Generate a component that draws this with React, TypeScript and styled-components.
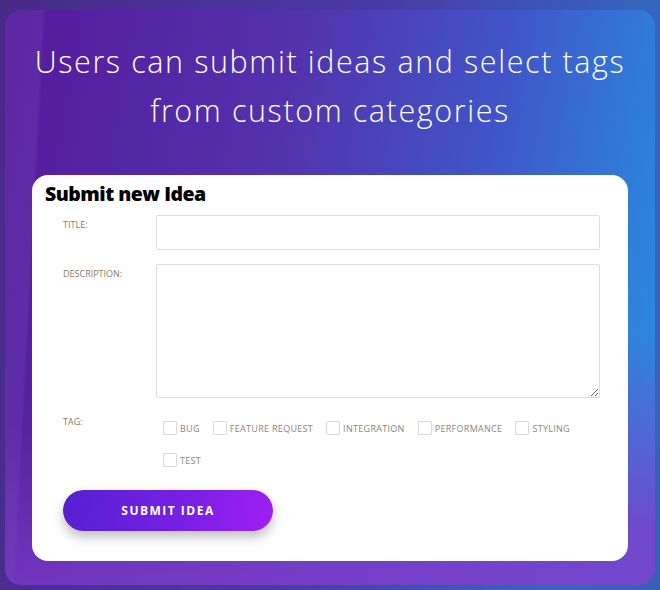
import React, { useState } from "react";
import styled, { createGlobalStyle } from "styled-components";

const TAGS = ["Bug", "Feature Request", "Integration", "Performance", "Styling", "Test"];

const GlobalStyle = createGlobalStyle`
  html, body {
    margin: 0;
    padding: 0;
  }
  body {
    width: 660px;
    height: 590px;
    overflow: hidden;
    font-family: "Open Sans", "Liberation Sans", sans-serif;
    background: linear-gradient(100deg, #462a86 0%, #4a3aa6 50%, #3466bd 85%, #3a5fb8 100%);
  }
`;

const Frame = styled.div`
  padding: 10px 5px 5px 5px;
  height: 590px;
  box-sizing: border-box;
`;

const Panel = styled.div`
  height: 100%;
  border-radius: 16px;
  overflow: hidden;
  box-sizing: border-box;
  padding: 27px 27px 0 27px;
  background:
    linear-gradient(172deg, transparent 62%, rgba(126, 60, 200, 0.85) 92%),
    linear-gradient(93deg, rgba(255, 255, 255, 0.06) 0 5.5%, transparent 6%),
    linear-gradient(100deg, #55199c 0%, #5333ad 40%, #4055c8 68%, #2f7ed9 88%, #2a90e0 100%);
`;

const Headline = styled.h1`
  margin: 0 -20px 40px -20px;
  color: #fff;
  font-family: "Open Sans", sans-serif;
  font-weight: 300;
  font-size: 30.5px;
  line-height: 49px;
  letter-spacing: 1.6px;
  text-align: center;
`;

const Card = styled.form`
  background: #fff;
  border-radius: 16px;
  padding: 6px 28px 30px 13px;
`;

const CardTitle = styled.h2`
  margin: 0 0 9px 0;
  font-family: "Open Sans", sans-serif;
  font-weight: 800;
  font-size: 19.5px;
  line-height: 25px;
  color: #000;
  letter-spacing: -0.5px;
`;

const Row = styled.div<{ $gap?: number }>`
  display: grid;
  grid-template-columns: 93px 1fr;
  margin-left: 18px;
  margin-bottom: ${(p) => p.$gap ?? 14}px;
`;

const Label = styled.label`
  margin-top: 2px;
  font-size: 9px;
  line-height: 16px;
  color: #8a7868;
  text-transform: uppercase;
`;

const Input = styled.input`
  height: 35px;
  box-sizing: border-box;
  border: 1px solid #dedede;
  border-radius: 2px;
  outline: none;
  padding: 0 8px;
`;

const TextArea = styled.textarea`
  height: 134px;
  box-sizing: border-box;
  border: 1px solid #dedede;
  border-radius: 2px;
  outline: none;
  resize: vertical;
  display: block;
`;

const TagList = styled.div`
  display: flex;
  flex-wrap: wrap;
  padding-left: 7px;
`;

const TagItem = styled.label`
  display: flex;
  align-items: center;
  height: 32px;
  margin-right: 13px;
  cursor: pointer;
`;

const Box = styled.span<{ $on: boolean }>`
  width: 12px;
  height: 12px;
  border: 1px solid #d9d9d9;
  border-radius: 1px;
  margin-right: 3px;
  background: ${(p) => (p.$on ? "#6a22d8" : "#fff")};
`;

const TagText = styled.span`
  font-size: 9px;
  letter-spacing: 0.3px;
  color: #8a8580;
  text-transform: uppercase;
`;

const SubmitButton = styled.button`
  margin: 14px 0 0 18px;
  width: 210px;
  height: 41px;
  border: none;
  border-radius: 21px;
  background: linear-gradient(100deg, #5421d0 0%, #7a1fe6 60%, #a020f2 100%);
  box-shadow: 0 6px 12px rgba(0, 0, 0, 0.25);
  color: #fff;
  font-family: "Open Sans", sans-serif;
  font-weight: 700;
  font-size: 12px;
  letter-spacing: 1.5px;
  text-transform: uppercase;
  cursor: pointer;
`;

export default function App() {
  const [checked, setChecked] = useState<string[]>([]);
  const toggle = (t: string) =>
    setChecked((c) => (c.includes(t) ? c.filter((x) => x !== t) : [...c, t]));

  return (
    <>
      <GlobalStyle />
      <Frame>
        <Panel>
          <Headline>
            Users can submit ideas and select tags
            <br />
            from custom categories
          </Headline>
          <Card onSubmit={(e) => e.preventDefault()}>
            <CardTitle>Submit new Idea</CardTitle>
            <Row>
              <Label>Title:</Label>
              <Input />
            </Row>
            <Row>
              <Label>Description:</Label>
              <TextArea />
            </Row>
            <Row $gap={0}>
              <Label>Tag:</Label>
              <TagList>
                {TAGS.map((t) => (
                  <TagItem key={t} onClick={() => toggle(t)}>
                    <Box $on={checked.includes(t)} />
                    <TagText>{t}</TagText>
                  </TagItem>
                ))}
              </TagList>
            </Row>
            <SubmitButton type="submit">Submit Idea</SubmitButton>
          </Card>
        </Panel>
      </Frame>
    </>
  );
}
